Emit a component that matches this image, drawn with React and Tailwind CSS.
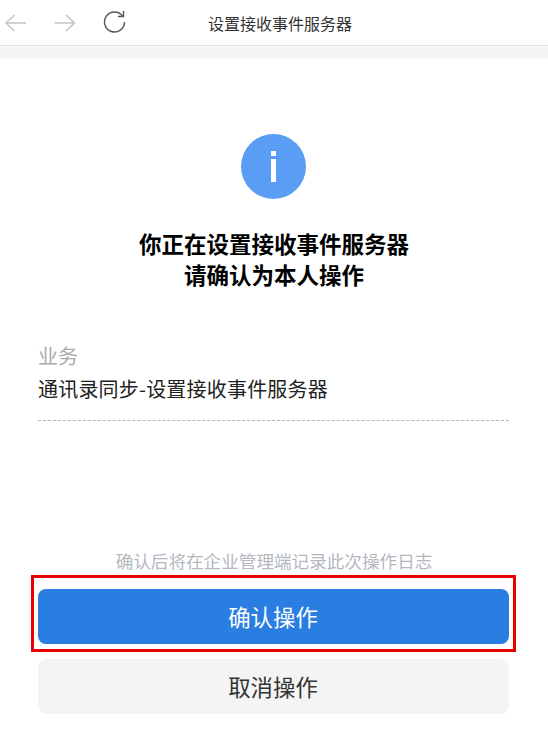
import React from 'react';

const font = { fontFamily: '"Noto Sans CJK SC", sans-serif' };

function App() {
  return (
    <div className="w-[548px] h-[751px] bg-white overflow-hidden" style={font}>
      {/* Top bar */}
      <div className="relative h-[46px] border-b border-[#e2e2e2] flex items-center">
        <div className="flex items-center pl-[4px]">
          <svg width="24" height="24" viewBox="0 0 24 24" fill="none" stroke="#c4c4c4" strokeWidth="1.5" className="mr-[25px]">
            <path d="M22 12H2M10.5 4 2 12l8.5 8" />
          </svg>
          <svg width="24" height="24" viewBox="0 0 24 24" fill="none" stroke="#c4c4c4" strokeWidth="1.5" className="mr-[26px]">
            <path d="M1.5 12h20M13 4l8.5 8-8.5 8" />
          </svg>
          <svg width="24" height="24" viewBox="0 0 24 24" fill="none" stroke="#555555" strokeWidth="1.4" className="mb-[2px]">
            <path d="M19.5 6A10 10 0 1 0 21.5 12" />
            <path d="M20.5 1v5.5h-5.5" />
          </svg>
        </div>
        <div className="absolute left-[12px] right-0 text-center text-[16px] text-[#333333]">设置接收事件服务器</div>
      </div>
      <div className="h-[13px] bg-[#f4f5f7]" />

      {/* Info icon */}
      <div className="mt-[75px] flex justify-center pr-[2px]">
        <div className="w-[65px] h-[65px] rounded-full bg-[#5a9df5] flex flex-col items-center justify-center">
          <div className="w-[5px] h-[5px] bg-white" />
          <div className="w-[5px] h-[23px] bg-white mt-[3px]" />
        </div>
      </div>

      <div className="mt-[29px] text-center text-[22.5px] leading-[31px] font-bold text-black">
        <div>你正在设置接收事件服务器</div>
        <div>请确认为本人操作</div>
      </div>

      {/* Detail */}
      <div className="mx-[38px] mt-[50px] w-[471px] h-[81px] border-b border-dashed border-[#b5b5b5]">
        <div className="text-[20px] leading-[32px] text-[#aaaaaa]">业务</div>
        <div className="text-[20px] leading-[34px] tracking-[0.2px] text-[#222222]">通讯录同步-设置接收事件服务器</div>
      </div>

      <div className="mt-[126px] text-center text-[17.6px] leading-[28px] text-[#b4b8bf]">确认后将在企业管理端记录此次操作日志</div>

      {/* Buttons */}
      <div className="ml-[31px] w-[485px] h-[77px] border-[3px] border-[#e60000] pt-[11px] px-[4px]">
        <button className="w-[471px] h-[55px] rounded-[8px] bg-[#2a7de1] text-white text-[22.4px] pr-[1px]">确认操作</button>
      </div>
      <button className="block ml-[38px] mt-[7px] w-[471px] h-[55px] rounded-[8px] bg-[#f4f4f4] text-[#333333] text-[22.4px] pr-[1px]">取消操作</button>
    </div>
  );
}

export default App;
